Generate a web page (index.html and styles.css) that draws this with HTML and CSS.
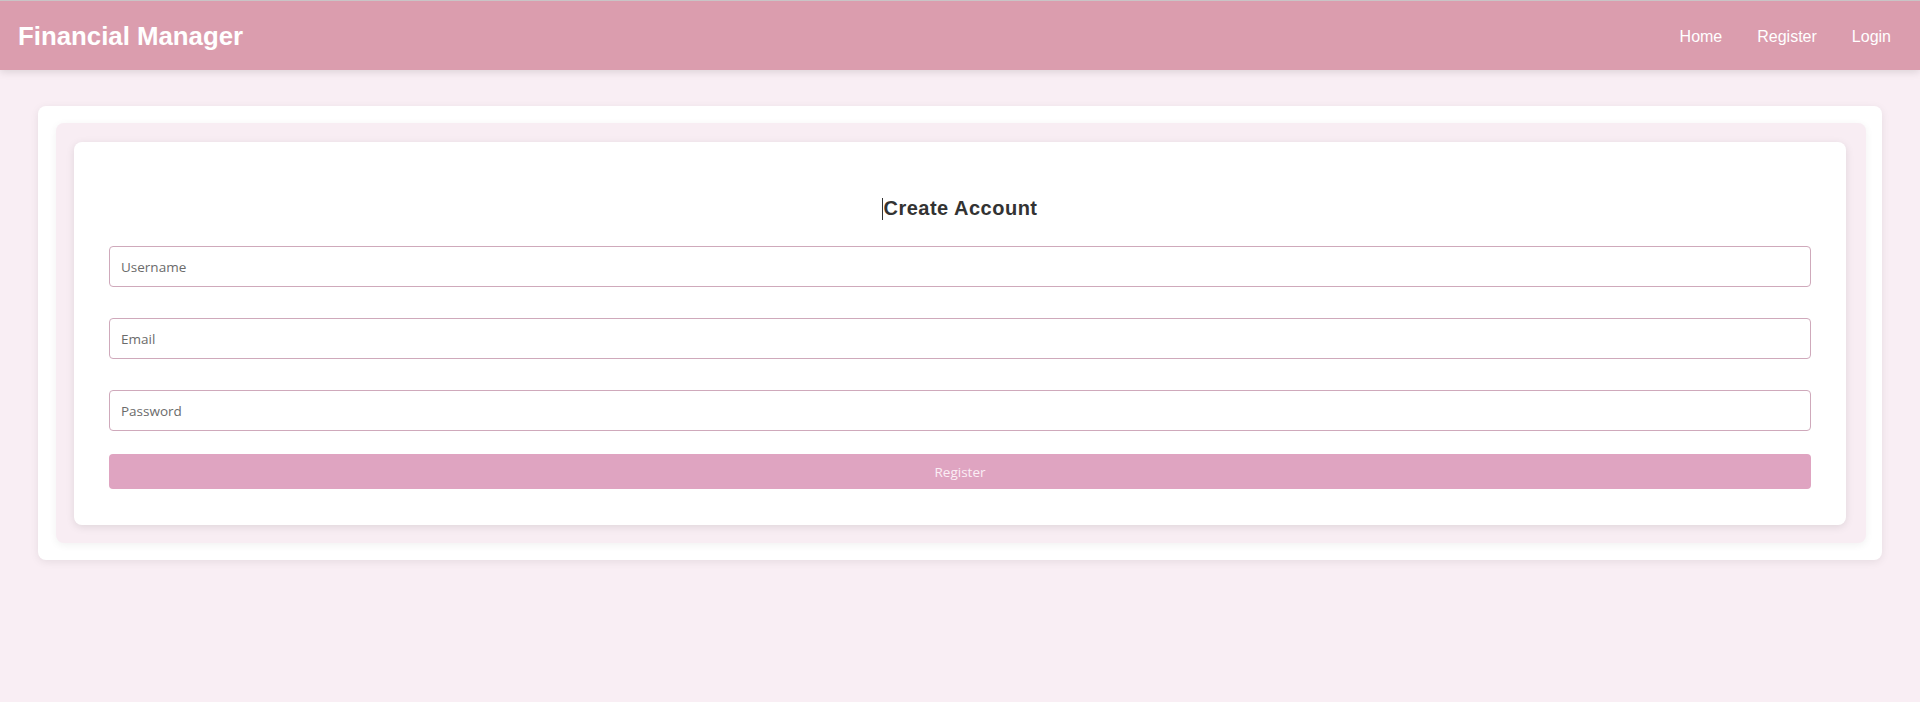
FILE: index.html
```html
<!DOCTYPE html>
<html lang="en">
<head>
<meta charset="utf-8">
<title>Financial Manager - Register</title>
<link rel="stylesheet" href="styles.css">
</head>
<body>
<header class="navbar">
  <div class="brand">Financial Manager</div>
  <nav class="nav-links">
    <a href="#">Home</a>
    <a href="#">Register</a>
    <a href="#">Login</a>
  </nav>
</header>
<main class="container">
  <section class="panel">
    <div class="card">
      <h2 class="title"><span class="caret"></span>Create Account</h2>
      <form class="form">
        <input class="field" type="text" placeholder="Username">
        <input class="field" type="email" placeholder="Email">
        <input class="field" type="password" placeholder="Password">
        <button class="btn" type="button">Register</button>
      </form>
    </div>
  </section>
</main>
</body>
</html>
```
FILE: styles.css
```css
* { box-sizing: border-box; }
html, body { margin: 0; padding: 0; }
body {
  background: #f9eef4;
  font-family: "Liberation Sans", Arial, sans-serif;
  border-top: 1px solid #c9c4c6;
  min-height: 702px;
}
.navbar {
  height: 69px;
  background: #db9dae;
  display: flex;
  align-items: center;
  justify-content: space-between;
  padding: 0 29px 0 18px;
  box-shadow: 0 2px 8px rgba(0,0,0,0.12);
}
.brand {
  color: #fff;
  font-weight: bold;
  font-size: 25.8px;
  padding-top: 2px;
}
.nav-links {
  display: flex;
  gap: 35px;
  padding-top: 2px;
}
.nav-links a {
  color: #fff;
  text-decoration: none;
  font-size: 16px;
}
.container {
  margin: 36px 38px 0;
  background: #fff;
  border-radius: 8px;
  padding: 17px 16px 17px 18px;
  box-shadow: 0 2px 8px rgba(0,0,0,0.08);
}
.panel {
  background: #f8edf3;
  border-radius: 8px;
  padding: 19px 20px 18px 18px;
  box-shadow: 0 2px 8px rgba(0,0,0,0.06);
}
.card {
  background: #fff;
  border-radius: 8px;
  padding: 35px 35px 36px;
  box-shadow: 0 2px 8px rgba(0,0,0,0.10);
}
.title {
  text-align: center;
  font-size: 20px;
  font-weight: bold;
  color: #333;
  margin: 19px 0 26px;
  letter-spacing: 0.5px;
  line-height: 24px;
}
.caret {
  display: inline-block;
  width: 1px;
  height: 22px;
  background: #333;
  vertical-align: -5px;
}
.form {
  display: flex;
  flex-direction: column;
}
.field {
  height: 41px;
  border: 1px solid #cfa9bb;
  border-radius: 4px;
  padding: 0 11px;
  font-family: "Open Sans", sans-serif;
  font-size: 13.5px;
  color: #333;
  margin-bottom: 31px;
  background: #fff;
  outline: none;
}
.field::placeholder { color: #6b6b6b; }
.field:last-of-type { margin-bottom: 23px; }
.btn {
  height: 35px;
  border: none;
  border-radius: 4px;
  background: #dfa4c1;
  color: #fbeef5;
  font-family: "Open Sans", sans-serif;
  font-size: 13.5px;
}
```
